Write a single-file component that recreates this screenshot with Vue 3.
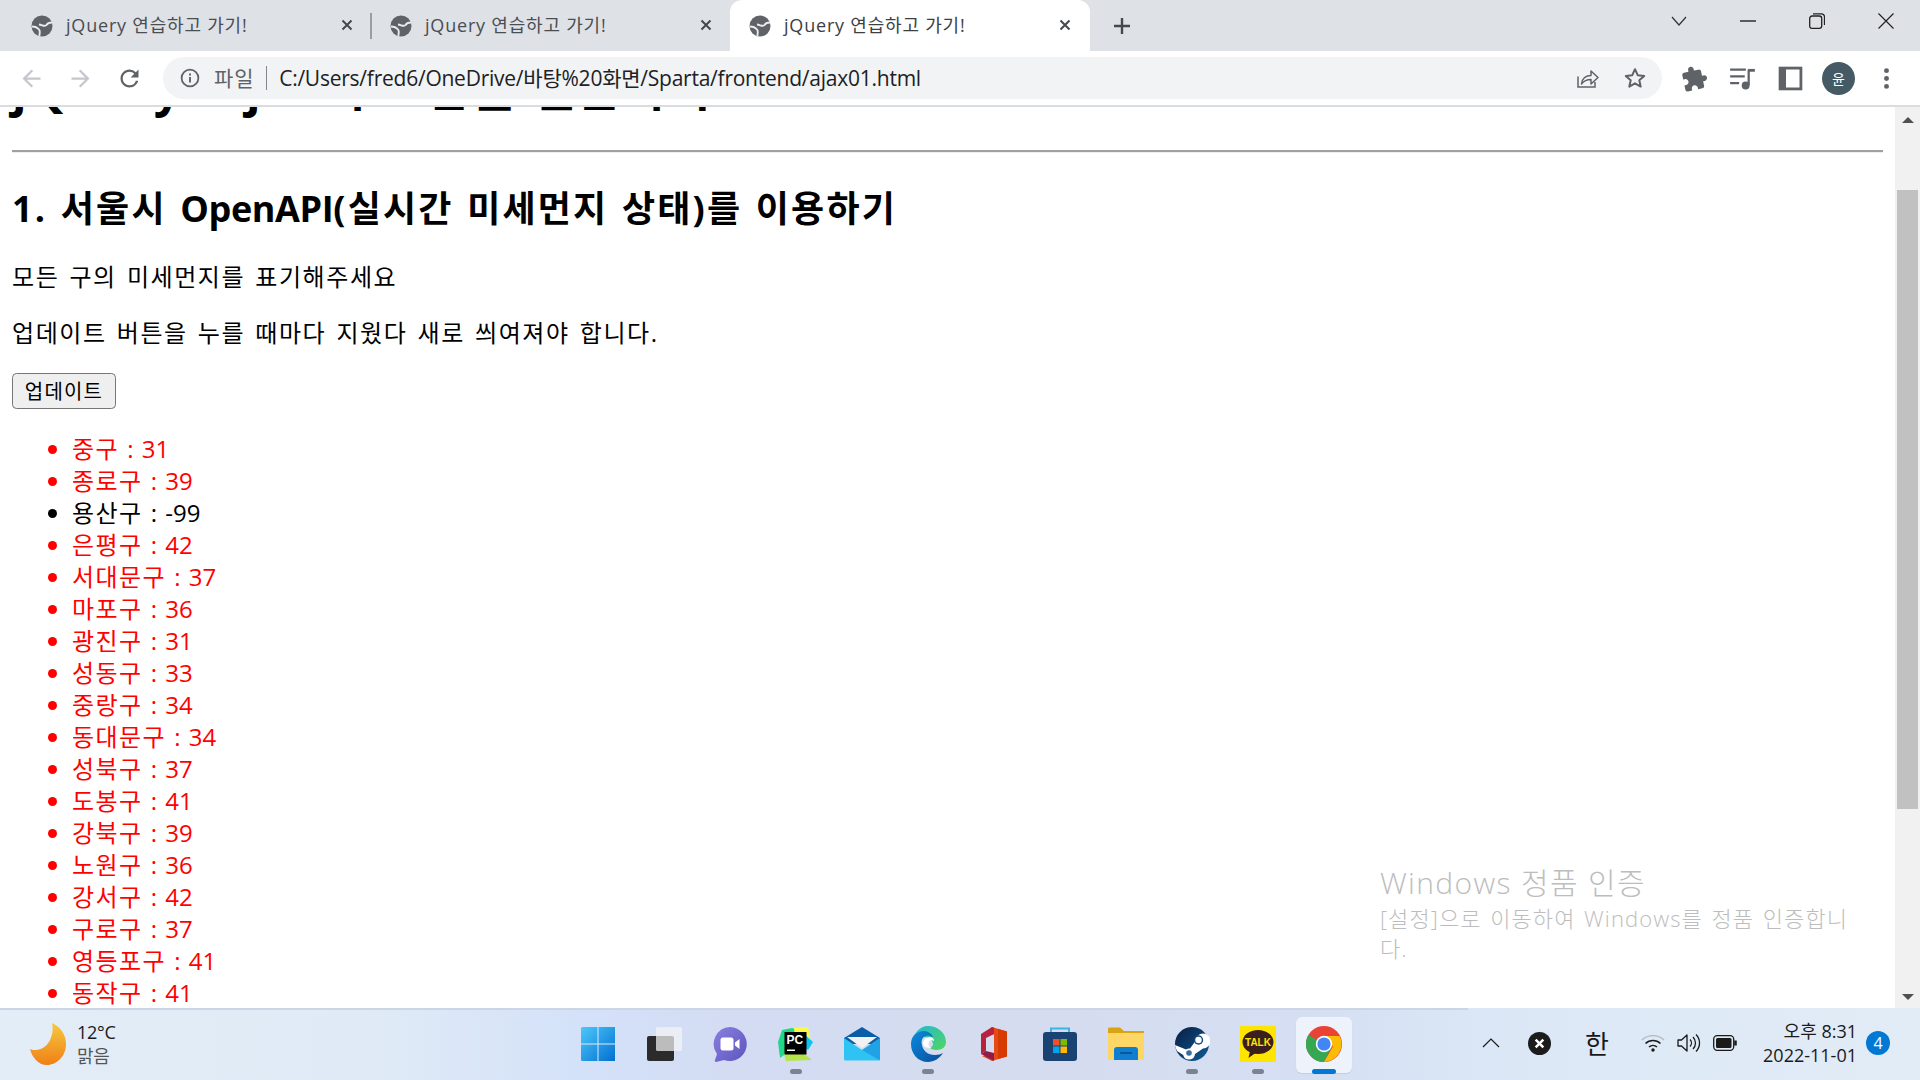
<template>
  <div class="win">
    <div class="tabstrip">
      <div v-for="(tab, i) in tabs" :key="i" class="tab" :class="{ active: tab.active }">
        <svg class="favicon" viewBox="0 0 24 24">
          <circle cx="12" cy="12" r="10.500" fill="#5f6368" />
          <path d="M22 8.500c-3 0-4.500.5-5.500 2.500-1.500 2-4 0-7.500-.5" fill="none" stroke="#e9ebee" stroke-width="1.900" />
          <path d="M2 12.500c3 0 4.500.5 6 2 1.500 1 2 1.500 1.800 3.500l-.5 4.500" fill="none" stroke="#e9ebee" stroke-width="1.900" />
        </svg>
        <span class="tab-title">{{ tab.title }}</span>
        <svg class="tab-close" viewBox="0 0 16 16"><path d="M3.500 3.500l9 9M12.500 3.500l-9 9" stroke="#45494d" stroke-width="2" /></svg>
        <i v-if="i === 0" class="tab-sep"></i>
      </div>
      <svg class="newtab" viewBox="0 0 20 20"><path d="M10 2v16M2 10h16" stroke="#45494d" stroke-width="2.400" /></svg>
      <div class="winctl">
        <span class="ctl">
          <svg width="16" height="10" viewBox="0 0 16 10"><path d="M1 1l7 8 7-8" fill="none" stroke="#333" stroke-width="1.200" /></svg>
        </span>
        <span class="ctl">
          <svg width="16" height="2" viewBox="0 0 16 2"><path d="M0 1h16" stroke="#222" stroke-width="1.400" /></svg>
        </span>
        <span class="ctl">
          <svg width="16" height="16" viewBox="0 0 16 16"><rect x=".7" y="3" width="12" height="12.300" rx="2.400" fill="none" stroke="#222" stroke-width="1.300" /><path d="M4 .8h8.500a3 3 0 0 1 3 3V12" fill="none" stroke="#222" stroke-width="1.300" /></svg>
        </span>
        <span class="ctl">
          <svg width="16" height="16" viewBox="0 0 16 16"><path d="M.5.5l15 15M15.500.5l-15 15" stroke="#222" stroke-width="1.200" /></svg>
        </span>
      </div>
    </div>

    <div class="toolbar">
      <svg class="tool-ic nav-first" viewBox="0 0 24 24"><path fill="#c4c7cb" d="M20 11H7.830l5.590-5.590L12 4l-8 8 8 8 1.410-1.410L7.830 13H20v-2z" /></svg>
      <svg class="tool-ic nav" viewBox="0 0 24 24"><path fill="#c4c7cb" d="M4 11h12.170l-5.590-5.590L12 4l8 8-8 8-1.410-1.410L16.170 13H4v-2z" /></svg>
      <svg class="tool-ic nav" viewBox="0 0 24 24"><path fill="#5f6368" d="M17.650 6.350A7.958 7.958 0 0 0 12 4c-4.420 0-7.990 3.580-7.990 8s3.570 8 7.990 8c3.730 0 6.840-2.550 7.730-6h-2.080A5.990 5.990 0 0 1 12 18c-3.310 0-6-2.690-6-6s2.690-6 6-6c1.660 0 3.140.69 4.220 1.780L13 11h7V4l-2.350 2.350z" /></svg>
      <div class="omnibox">
        <svg class="info" viewBox="0 0 20 20"><circle cx="10" cy="10" r="8.400" fill="none" stroke="#5f6368" stroke-width="1.800" /><path d="M10 9v5.600M10 5.400v2" stroke="#5f6368" stroke-width="1.900" /></svg>
        <span class="scheme">파일</span>
        <i class="omni-sep"></i>
        <span class="url">C:/Users/fred6/OneDrive/바탕%20화면/Sparta/frontend/ajax01.html</span>
        <svg class="omni-ic share" viewBox="0 0 24 24"><path d="M3 10.500V21h17v-5" fill="none" stroke="#5f6368" stroke-width="1.500" /><path d="M6.500 18c.6-5.500 4.500-8.500 9.500-8.500V5l7 6.500L16 18v-4.500c-4 0-7 1.200-9.500 4.500z" fill="none" stroke="#5f6368" stroke-width="1.500" stroke-linejoin="round" /></svg>
        <svg class="omni-ic star" viewBox="0 0 24 24"><path d="M12 3.200l2.700 6 6.500.7-4.900 4.300 1.400 6.400L12 17.300l-5.700 3.300 1.400-6.400-4.900-4.300 6.500-.7z" fill="none" stroke="#5f6368" stroke-width="2" stroke-linejoin="round" /></svg>
      </div>
      <svg class="tool-ic ext" viewBox="0 0 24 24"><path fill="#5f6368" transform="rotate(-12 12 12)" d="M20.500 11H19V7c0-1.100-.9-2-2-2h-4V3.500C13 2.120 11.880 1 10.500 1S8 2.120 8 3.500V5H4c-1.100 0-1.990.9-1.990 2v3.800H3.500c1.490 0 2.700 1.210 2.700 2.700s-1.210 2.700-2.700 2.700H2V20c0 1.100.9 2 2 2h3.800v-1.500c0-1.490 1.210-2.700 2.700-2.700 1.490 0 2.700 1.210 2.700 2.700V22H17c1.100 0 2-.9 2-2v-4h1.500c1.380 0 2.500-1.120 2.500-2.500S21.880 11 20.500 11z" /></svg>
      <svg class="tool-ic media" viewBox="0 0 24 24"><path d="M1 4h14M1 10h13M1 16h8" stroke="#5f6368" stroke-width="2" /><path d="M17.500 4v14" stroke="#5f6368" stroke-width="2" /><path d="M17 3.500h6v2.500h-6z" fill="#5f6368" /><circle cx="14.800" cy="18.200" r="3.500" fill="#5f6368" /></svg>
      <svg class="tool-ic media" viewBox="0 0 24 24"><rect x="1.500" y="1.500" width="21" height="21" fill="#5f6368" /><rect x="8" y="4" width="12" height="16" fill="#fff" /></svg>
      <div class="avatar">윤</div>
      <svg class="tool-ic dots" viewBox="0 0 24 24"><circle cx="12" cy="5" r="2.200" fill="#5f6368" /><circle cx="12" cy="12" r="2.200" fill="#5f6368" /><circle cx="12" cy="19" r="2.200" fill="#5f6368" /></svg>
    </div>

    <div class="page">
      <div class="doc">
        <h1>jQuery+Ajax의 조합을 연습하자!</h1>
        <hr />
        <h2>1. 서울시 <span class="lat">OpenAPI</span>(실시간 미세먼지 상태)를 이용하기</h2>
        <p>모든 구의 미세먼지를 표기해주세요</p>
        <p>업데이트 버튼을 누를 때마다 지웠다 새로 씌여져야 합니다.</p>
        <button type="button">업데이트</button>
        <ul>
          <li v-for="row in rows" :key="row.gu" :class="{ bad: row.mise > 30 }"><span class="gu">{{ row.gu }}</span> : {{ row.mise }}</li>
        </ul>
      </div>
      <div class="scrollbar">
        <span class="arrow up"></span>
        <div class="thumb"></div>
        <span class="arrow down"></span>
      </div>
      <div class="watermark">
        <div class="wm-title">Windows 정품 인증</div>
        <div class="wm-sub">[설정]으로 이동하여 Windows를 정품 인증합니다.</div>
      </div>
    </div>

    <div class="taskbar">
      <div class="weather">
        <svg class="moon" viewBox="0 0 36 44">
          <defs>
            <linearGradient id="moonfill" x1="0" y1="0" x2="0" y2="1"><stop offset="0" stop-color="#f6c93e" /><stop offset="1" stop-color="#f07f17" /></linearGradient>
          </defs>
          <path fill="url(#moonfill)" d="M22 1c9 4 14 12 14 21 0 12-9 21-19 21C8 43 2 35 0 27c2 1 4 1 6 1 11 0 19-14 16-27z" />
        </svg>
        <div class="weather-text">
          <div>12°C</div>
          <div class="dim">맑음</div>
        </div>
      </div>

      <div class="apps">
        <div class="app">
          <svg viewBox="0 0 36 36">
            <defs>
              <linearGradient id="winfill" x1="0" y1="0" x2="1" y2="1"><stop offset="0" stop-color="#4cc8fb" /><stop offset="1" stop-color="#0270d0" /></linearGradient>
            </defs>
            <path fill="url(#winfill)" d="M1 2.500A1.500 1.500 0 0 1 2.500 1H35v34H2.500A1.500 1.500 0 0 1 1 33.500z" />
            <path d="M18 1v34M1 18h34" stroke="#e0eafa" stroke-width="1" />
          </svg>
        </div>
        <div class="app">
          <svg viewBox="0 0 36 36">
            <rect x="1" y="10" width="27" height="25" rx="2" fill="#2b2b2b" />
            <rect x="10" y="1" width="26" height="24" rx="1.500" fill="#f4f4f4" fill-opacity=".72" />
          </svg>
        </div>
        <div class="app">
          <svg viewBox="0 0 36 36">
            <defs>
              <linearGradient id="chatfill" x1="0" y1="0" x2="1" y2="1"><stop offset="0" stop-color="#8b80e0" /><stop offset="1" stop-color="#5b55bd" /></linearGradient>
            </defs>
            <path fill="url(#chatfill)" d="M18 1a17 17 0 1 1-6 33l-8 2c-1 0-1.500-1-1-2l2-6A17 17 0 0 1 18 1z" />
            <rect x="8.500" y="11.500" width="13" height="13" rx="2.500" fill="#fff" />
            <path d="M23 16.500l4.500-3.500v10L23 19.500z" fill="#fff" />
          </svg>
        </div>
        <div class="app running">
          <svg viewBox="0 0 36 36">
            <path fill="#21d789" d="M4 4l10-2 6 2-2 16-16 12-2-16z" />
            <path fill="#fcf84a" d="M16 2l14-1 3 16-15 6z" />
            <path fill="#07c3f2" d="M26 8l9 8-5 8-8-6z" />
            <path fill="#b4e34a" d="M6 28l10-8 18 14-26 1z" />
            <rect x="6.500" y="6" width="22" height="22.500" fill="#000" />
            <text x="8.500" y="18" class="pc">PC</text>
            <rect x="9" y="23.500" width="8" height="1.500" fill="#fff" />
          </svg>
        </div>
        <div class="app">
          <svg viewBox="0 0 36 36">
            <path fill="#0a5ea8" d="M0 12L18 1l18 11v6H0z" />
            <path fill="#f2f2f2" d="M3 11h30L18 22z" />
            <path fill="#2fc3f3" d="M0 12l18 12 18-12v21a1.500 1.500 0 0 1-1.500 1.500h-33A1.500 1.500 0 0 1 0 33z" />
            <path fill="#1288d8" d="M18 24l18-12v22.500z" opacity=".55" />
          </svg>
        </div>
        <div class="app running">
          <svg viewBox="0 0 36 36">
            <defs>
              <linearGradient id="edgeouter" x1="0" y1="0" x2="1" y2="1"><stop offset="0" stop-color="#1fb8d8" /><stop offset="1" stop-color="#52d65c" /></linearGradient>
              <linearGradient id="edgeblue" x1="0" y1="0" x2="1" y2="1"><stop offset="0" stop-color="#0c8adf" /><stop offset="1" stop-color="#0b4c98" /></linearGradient>
            </defs>
            <path fill="url(#edgeouter)" d="M18 0c10 0 18 7 18 16 0 5-4 8-9 8-4 0-7-1-7-3 2 0 3-1 3-3 0-4-5-7-9-7-6 0-11 4-13 9C3 8 9 0 18 0z" />
            <path fill="url(#edgeblue)" d="M1 18c0-8 6-13 13-13 5 0 9 4 9 7-2-2-4-3-7-2-4 1-5 5-4 9 1 6 6 10 13 10 3 0 6-1 8-2-3 5-9 9-15 9C8 36 1 28 1 18z" />
            <path fill="#fff" d="M13 18c0-4 3-7 7-7 3 0 4 2 4 4-2-1-4-1-5 1s0 5 3 6c-5 0-9-1-9-4z" opacity=".95" />
          </svg>
        </div>
        <div class="app">
          <svg viewBox="0 0 36 36">
            <path fill="#e64a19" d="M16 1l15 4.500v25L16 35l-10-5h12V8L8 12z" />
            <path fill="#b5243c" d="M16 1L5 8v20l5-3V12l8-4V2z" />
            <path fill="#d83b01" d="M22 3l9 2.500v25L22 33z" />
            <path fill="#8e1b4a" d="M5 28l5-3 8 2v8z" />
          </svg>
        </div>
        <div class="app">
          <svg viewBox="0 0 36 36">
            <path d="M9 7V2.500h18V7" fill="none" stroke="#35b5e8" stroke-width="2" />
            <rect x="1" y="6" width="34" height="29" rx="3" fill="#1a4373" />
            <rect x="11" y="13" width="6.500" height="6.500" fill="#f25022" />
            <rect x="18.500" y="13" width="6.500" height="6.500" fill="#7fba00" />
            <rect x="11" y="20.500" width="6.500" height="6.500" fill="#00a4ef" />
            <rect x="18.500" y="20.500" width="6.500" height="6.500" fill="#ffb900" />
          </svg>
        </div>
        <div class="app">
          <svg viewBox="0 0 36 36">
            <path fill="#d9a313" d="M0 3a1.500 1.500 0 0 1 1.500-1.500H12L16 5h20v8H0z" />
            <path fill="#fdd765" d="M0 7h36v26a1 1 0 0 1-1 1H0z" />
            <path fill="#0f7dd0" d="M6 24a3 3 0 0 1 3-3h18a3 3 0 0 1 3 3v10H6z" />
            <path d="M12 27h12" stroke="#0a4d8c" stroke-width="1.600" />
          </svg>
        </div>
        <div class="app running">
          <svg viewBox="0 0 36 36">
            <defs>
              <linearGradient id="steamfill" x1="0" y1="0" x2="1" y2="1"><stop offset="0" stop-color="#0b1e44" /><stop offset="1" stop-color="#0d5c96" /></linearGradient>
            </defs>
            <circle cx="18" cy="18" r="17" fill="url(#steamfill)" />
            <path fill="#fff" d="M1 19l11 4.500a6 6 0 0 1 4-1l5.500-7.500a7.500 7.500 0 1 1 7.500 7.500l-8 5.500a6 6 0 0 1-11.800 1L3 25a17 17 0 0 1-2-6z" />
            <circle cx="24.500" cy="14" r="4.700" fill="#154d7f" />
            <circle cx="24.500" cy="14" r="3.200" fill="#fff" />
            <circle cx="15" cy="27" r="2.800" fill="#3a6e9c" />
          </svg>
        </div>
        <div class="app running">
          <svg viewBox="0 0 36 36">
            <rect width="36" height="36" rx="1" fill="#fee500" />
            <ellipse cx="18" cy="16" rx="15.500" ry="12" fill="#3c1e1e" />
            <path d="M10 25l-1.500 7 7-5z" fill="#3c1e1e" />
            <text x="18" y="19.500" class="talk">TALK</text>
          </svg>
        </div>
        <div class="app current">
          <svg viewBox="0 0 36 36">
            <circle cx="18" cy="18" r="18" fill="#ea4335" />
            <path d="M18 18L2.400 27A18 18 0 0 1 2.400 9z" fill="#34a853" />
            <path d="M18 36A18 18 0 0 1 2.400 27l7.800-4.500L18 18l9 0z" fill="#34a853" />
            <path d="M18 10h15.600A18 18 0 0 1 18 36l9-15.500z" fill="#fbbc04" />
            <circle cx="18" cy="18" r="8.200" fill="#fff" />
            <circle cx="18" cy="18" r="6.600" fill="#4285f4" />
          </svg>
        </div>
      </div>

      <div class="tray">
        <svg class="tray-up" width="18" height="10" viewBox="0 0 18 10"><path d="M1 9l8-8 8 8" fill="none" stroke="#1a1a1a" stroke-width="1.200" /></svg>
        <svg class="tray-x" width="23" height="23" viewBox="0 0 24 24"><circle cx="12" cy="12" r="12" fill="#1c1c1c" /><path d="M8 8l8 8M16 8l-8 8" stroke="#fff" stroke-width="2.600" /></svg>
        <span class="ime">한</span>
        <svg class="tray-wifi" width="24" height="18" viewBox="0 0 24 18">
          <path d="M1 6a16 16 0 0 1 22 0" fill="none" stroke="#b4b8bd" stroke-width="1.400" />
          <path d="M4.500 9.500a11 11 0 0 1 15 0M8 13a6 6 0 0 1 8 0" fill="none" stroke="#1a1a1a" stroke-width="1.500" />
          <circle cx="12" cy="16" r="1.700" fill="#1a1a1a" />
        </svg>
        <svg class="tray-vol" width="24" height="20" viewBox="0 0 24 20">
          <path d="M1 7v6h3.500L10 18V2L4.500 7z" fill="none" stroke="#1a1a1a" stroke-width="1.300" stroke-linejoin="round" />
          <path d="M13 6.500a5 5 0 0 1 0 7M16 4a8.500 8.500 0 0 1 0 12M19 1.500a12 12 0 0 1 0 17" fill="none" stroke="#1a1a1a" stroke-width="1.300" />
        </svg>
        <svg class="tray-bat" width="24" height="16" viewBox="0 0 24 16">
          <rect x=".7" y=".7" width="20" height="14.600" rx="3.500" fill="none" stroke="#1a1a1a" stroke-width="1.300" />
          <rect x="3" y="3" width="15.500" height="10" rx="1.500" fill="#1a1a1a" />
          <path d="M22.500 5.500v5" stroke="#1a1a1a" stroke-width="2.500" />
        </svg>
        <div class="clock">
          <div>오후 8:31</div>
          <div>2022-11-01</div>
        </div>
        <span class="badge">4</span>
      </div>
    </div>
  </div>
</template>

<script setup>
const tabs = [
  { title: 'jQuery 연습하고 가기!' },
  { title: 'jQuery 연습하고 가기!' },
  { title: 'jQuery 연습하고 가기!', active: true }
]

const rows = [
  { gu: '중구', mise: 31 },
  { gu: '종로구', mise: 39 },
  { gu: '용산구', mise: -99 },
  { gu: '은평구', mise: 42 },
  { gu: '서대문구', mise: 37 },
  { gu: '마포구', mise: 36 },
  { gu: '광진구', mise: 31 },
  { gu: '성동구', mise: 33 },
  { gu: '중랑구', mise: 34 },
  { gu: '동대문구', mise: 34 },
  { gu: '성북구', mise: 37 },
  { gu: '도봉구', mise: 41 },
  { gu: '강북구', mise: 39 },
  { gu: '노원구', mise: 36 },
  { gu: '강서구', mise: 42 },
  { gu: '구로구', mise: 37 },
  { gu: '영등포구', mise: 41 },
  { gu: '동작구', mise: 41 }
]
</script>

<style>
html, body {
  margin: 0;
  overflow: hidden;
}
</style>

<style scoped>
.win {
  width: 1920px;
  height: 1080px;
  display: flex;
  flex-direction: column;
  overflow: hidden;
  font-family: "Open Sans", "Noto Sans CJK KR", sans-serif;
  color: #000;
}

/* tabs */
.tabstrip {
  height: 51px;
  background: #dee1e6;
  display: flex;
  padding-left: 12px;
  flex: none;
}
.tab {
  width: 359px;
  height: 51px;
  display: flex;
  align-items: center;
  padding-left: 18px;
  box-sizing: border-box;
  position: relative;
  color: #4a4d51;
}
.tab.active {
  background: #fff;
  border-radius: 12px 12px 0 0;
  color: #3c4043;
  width: 360px;
}
.favicon {
  width: 24px;
  height: 24px;
  flex: none;
}
.tab-title {
  margin-left: 12px;
  padding-bottom: 3px;
  font-size: 18px;
  letter-spacing: .8px;
  white-space: nowrap;
}
.tab-close {
  position: absolute;
  left: 327px;
  top: 17px;
  width: 16px;
  height: 16px;
}
.tab-sep {
  position: absolute;
  left: 358px;
  top: 13px;
  width: 1.500px;
  height: 26px;
  background: #9a9ea3;
}
.newtab {
  width: 20px;
  height: 20px;
  margin: 16px 0 0 22px;
}
.winctl {
  margin-left: auto;
  display: flex;
}
.ctl {
  width: 69px;
  height: 42px;
  display: flex;
  align-items: center;
  justify-content: center;
}

/* toolbar */
.toolbar {
  height: 54px;
  border-bottom: 2px solid #dadce0;
  background: #fff;
  display: flex;
  align-items: center;
  flex: none;
}
.tool-ic {
  width: 27px;
  height: 27px;
  flex: none;
}
.nav-first {
  margin-left: 18px;
}
.nav {
  margin-left: 22px;
}
.omnibox {
  width: 1499px;
  height: 42px;
  margin-left: 20px;
  border-radius: 21px;
  background: #f1f3f4;
  display: flex;
  align-items: center;
  font-size: 21px;
  color: #202124;
  flex: none;
}
.info {
  width: 20px;
  height: 20px;
  margin-left: 17px;
}
.scheme {
  margin-left: 14px;
  padding-bottom: 2px;
  color: #5f6368;
  letter-spacing: 1px;
  white-space: nowrap;
}
.omni-sep {
  width: 1.500px;
  height: 24px;
  margin: 0 12px 0 11px;
  background: #80868b;
}
.url {
  padding-bottom: 2px;
  letter-spacing: -.24px;
  white-space: nowrap;
}
.omni-ic {
  width: 24px;
  height: 24px;
}
.share {
  margin-left: auto;
}
.star {
  margin: 0 15px 0 24px;
}
.ext {
  margin-left: 19px;
}
.media {
  margin-left: 21px;
}
.avatar {
  width: 33px;
  height: 33px;
  margin-left: 18px;
  border-radius: 50%;
  background: #455a64;
  color: #fff;
  font-size: 14px;
  display: flex;
  align-items: center;
  justify-content: center;
  flex: none;
}
.dots {
  margin-left: 18px;
}

/* page */
.page {
  flex: 1;
  min-height: 0;
  position: relative;
  display: flex;
  overflow: hidden;
  background: #fff;
}
.doc {
  flex: 1;
  margin-top: -97px;
  padding: 12px;
  font-size: 24px;
  line-height: 32px;
}
h1 {
  font-size: 48px;
  line-height: 64px;
  font-weight: 700;
  letter-spacing: .03em;
  margin: 32px 0 30px;
  padding-top: 2px;
}
hr {
  margin: 12px 0;
  border: 0;
  border-top: 2px solid #a0a0a0;
  border-bottom: 1px solid #eee;
}
h2 {
  font-size: 36px;
  line-height: 48px;
  font-weight: 700;
  letter-spacing: .06em;
  word-spacing: .06em;
  margin: 30px 0 28px;
  padding-top: 2px;
}
.lat {
  letter-spacing: -.4px;
}
p {
  margin: 24px 0;
  letter-spacing: .065em;
  word-spacing: .1em;
}
button {
  display: block;
  width: 104px;
  height: 36px;
  padding: 1px 0 0;
  font: inherit;
  font-size: 20px;
  line-height: 32px;
  letter-spacing: 1.200px;
  color: #000;
  background: #efefef;
  border: 1.500px solid #767676;
  border-radius: 4.500px;
}
ul {
  margin: 24px 0;
  padding-left: 60px;
}
li {
  word-spacing: 2px;
}
.gu {
  letter-spacing: .06em;
}
li.bad {
  color: red;
}
.scrollbar {
  width: 25px;
  background: #f1f1f1;
  display: flex;
  flex-direction: column;
  align-items: center;
  flex: none;
}
.arrow {
  width: 0;
  height: 0;
  flex: none;
  border-left: 6px solid transparent;
  border-right: 6px solid transparent;
}
.arrow.up {
  margin-top: 10px;
  border-bottom: 6px solid #505050;
}
.arrow.down {
  margin-top: auto;
  margin-bottom: 8px;
  border-top: 6px solid #505050;
}
.thumb {
  width: 21px;
  height: 619px;
  margin-top: 67px;
  background: #c1c1c1;
}
.watermark {
  position: absolute;
  left: 1380px;
  top: 756px;
  width: 472px;
  color: #bdbdbd;
  font-weight: 300;
}
.wm-title {
  font-size: 30px;
  line-height: 40px;
  letter-spacing: .045em;
}
.wm-sub {
  font-size: 22px;
  line-height: 30px;
  letter-spacing: .05em;
  word-spacing: .08em;
}

/* taskbar */
.taskbar {
  height: 72px;
  flex: none;
  display: flex;
  position: relative;
  background:
    linear-gradient(#cbd5e6, #cbd5e6) no-repeat left top / 1468px 2px,
    linear-gradient(90deg, #e3edf7 0%, #dfeaf6 20%, #d4e2f9 30%, #d3dcf3 38%, #d6dcef 55%, #d5dff3 68%, #dce8f6 80%, #e2ecf6 100%);
}
.weather {
  width: 565px;
  display: flex;
  align-items: center;
  flex: none;
}
.moon {
  width: 36px;
  height: 44px;
  margin-left: 30px;
}
.weather-text {
  margin-left: 11px;
  font-size: 18px;
  line-height: 24px;
  letter-spacing: -.3px;
  color: #1a1a1a;
}
.dim {
  color: #555;
}
.apps {
  display: flex;
  flex: none;
}
.app {
  width: 66px;
  height: 72px;
  display: flex;
  align-items: center;
  justify-content: center;
  position: relative;
}
.app svg {
  width: 36px;
  height: 36px;
}
.app.running::after,
.app.current::after {
  content: "";
  position: absolute;
  bottom: 6px;
  left: 27px;
  width: 12px;
  height: 5px;
  border-radius: 3px;
  background: #7c8290;
}
.app.current::before {
  content: "";
  position: absolute;
  left: 5px;
  top: 9px;
  width: 56px;
  height: 56px;
  border-radius: 6px;
  background: #eef2fb;
  box-shadow: 0 1px 1px #c4cde0;
}
.app.current svg {
  position: relative;
}
.app.current::after {
  left: 21px;
  width: 24px;
  background: #0078d4;
}
.pc {
  font-family: "Liberation Sans", sans-serif;
  font-size: 12px;
  font-weight: 700;
  fill: #fff;
}
.talk {
  font-family: "Liberation Sans", sans-serif;
  font-size: 10px;
  font-weight: 700;
  fill: #fee500;
  text-anchor: middle;
}
.tray {
  flex: 1;
  display: flex;
  align-items: center;
  position: relative;
  color: #1a1a1a;
  padding-bottom: 2px;
  box-sizing: border-box;
}
.tray-up {
  margin-left: 125px;
}
.tray-x {
  margin-left: 28px;
}
.ime {
  font-size: 26px;
  margin-left: 34px;
}
.tray-wifi {
  margin-left: 32px;
}
.tray-vol {
  margin-left: 12px;
}
.tray-bat {
  margin-left: 12px;
}
.clock {
  margin-left: auto;
  margin-right: 9px;
  font-size: 18px;
  line-height: 24px;
  text-align: right;
  white-space: nowrap;
}
.badge {
  width: 24px;
  height: 24px;
  margin-right: 30px;
  border-radius: 50%;
  background: #0078d4;
  color: #fff;
  font-size: 16px;
  display: flex;
  align-items: center;
  justify-content: center;
  flex: none;
}
</style>
